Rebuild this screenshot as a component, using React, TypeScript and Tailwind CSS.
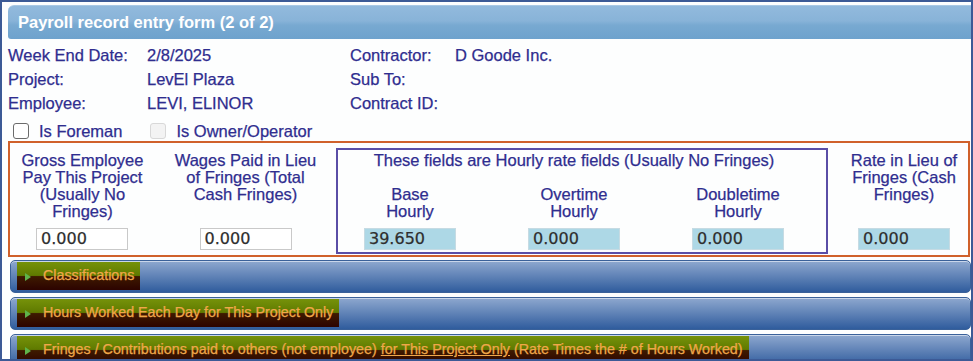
import React from 'react';

const ink = 'text-[#2f2d8f]';

function Field({ value, tinted }: { value: string; tinted?: boolean }) {
  return (
    <div
      className={
        'w-[92px] h-[22px] pl-[4px] flex items-center text-[16px] leading-none text-[#2e2e2e] ' +
        (tinted ? 'bg-[#add8e6] border border-[#c6dbe3]' : 'bg-white border border-[#c9c9c9]')
      }
      style={{ fontFamily: '"DejaVu Sans", sans-serif' }}
    >
      {value}
    </div>
  );
}

function Section({ children }: { children: React.ReactNode }) {
  return (
    <div className="h-[33px] ml-[2px] rounded-[5px] border border-[#3a6199] bg-gradient-to-b from-[#8ea8cf] via-[#5f82b6] to-[#2f5c9d] pt-[1px] pl-[6px] shadow-[inset_0_1px_0_#c9d6ea]">
      <div className="inline-flex items-center h-[28px] pl-[8px] pr-[6px] bg-[linear-gradient(#76920a_0%,#5f7a00_48%,#3e1a00_52%,#2c0300_100%)] text-[14.3px] text-[#f0a74a]">
        <svg width="6" height="8" viewBox="0 0 6 8" className="mr-[12px] mt-[2px]">
          <path d="M0 0 L6 4 L0 8 Z" fill="#5fb34a" />
        </svg>
        <span>{children}</span>
      </div>
    </div>
  );
}

export default function App() {
  return (
    <div
      className="w-[973px] h-[361px] overflow-hidden border-2 border-[#3c5a96] bg-[#fdfefe] pl-[6px] pt-[3px] [-webkit-text-stroke:0.25px_currentColor]"
      style={{ fontFamily: '"Liberation Sans", Arial, sans-serif' }}
    >
      {/* Title bar */}
      <div className="h-[34px] rounded-tl-[6px] rounded-bl-[3px] border-t border-[#a9c8e4] bg-[linear-gradient(#92badd_0%,#88b3d8_45%,#78a9d1_58%,#6ea2cd_100%)] flex items-center pl-[10px]">
        <span className="text-white font-bold text-[16.5px] [-webkit-text-stroke:0px]">Payroll record entry form (2 of 2)</span>
      </div>

      {/* Header info */}
      <div className={`mt-[4px] text-[16.5px] ${ink} grid grid-cols-[139px_203px_105px_1fr]`}>
        <div className="h-[24px] flex items-center">Week End Date:</div>
        <div className="h-[24px] flex items-center">2/8/2025</div>
        <div className="h-[24px] flex items-center">Contractor:</div>
        <div className="h-[24px] flex items-center">D Goode Inc.</div>
        <div className="h-[24px] flex items-center">Project:</div>
        <div className="h-[24px] flex items-center">LevEl Plaza</div>
        <div className="h-[24px] flex items-center">Sub To:</div>
        <div className="h-[24px] flex items-center"></div>
        <div className="h-[24px] flex items-center">Employee:</div>
        <div className="h-[24px] flex items-center">LEVI, ELINOR</div>
        <div className="h-[24px] flex items-center">Contract ID:</div>
        <div className="h-[24px] flex items-center"></div>
      </div>

      <div className={`mt-[6px] h-[20px] flex items-center text-[16.5px] ${ink}`}>
        <span className="ml-[5px] w-[16px] h-[16px] rounded-[3px] border-[1.5px] border-[#6b6b6b] bg-white" />
        <span className="ml-[10px]">Is Foreman</span>
        <span className="ml-[28px] w-[16px] h-[16px] rounded-[3px] border border-[#d8d8d8] bg-[#f3f3f3]" />
        <span className="ml-[10px]">Is Owner/Operator</span>
      </div>

      {/* Rates */}
      <div className={`mr-[1px] border-2 border-[#d0612b] flex pt-[5px] pb-[1px] text-[16.5px] leading-[17px] ${ink}`}>
        <div className="w-[145px] flex flex-col items-center pt-[4px]">
          <div className="h-[68px] text-center">
            Gross Employee<br />Pay This Project<br />(Usually No<br />Fringes)
          </div>
          <div className="mt-[8px] ml-[-1px]">
            <Field value="0.000" />
          </div>
        </div>
        <div className="w-[181px] flex flex-col items-center pt-[4px]">
          <div className="h-[68px] text-center">
            Wages Paid in Lieu<br />of Fringes (Total<br />Cash Fringes)
          </div>
          <div className="mt-[8px]">
            <Field value="0.000" />
          </div>
        </div>
        <div className="w-[492px] border-2 border-[#5a4ea6] pt-[2px] pb-[2px] pl-[2px]">
          <div className="w-[468px] text-center">These fields are Hourly rate fields (Usually No Fringes)</div>
          <div className="w-[468px] mt-[17px] flex gap-[24px]">
            {[
              ['Base', '39.650'],
              ['Overtime', '0.000'],
              ['Doubletime', '0.000'],
            ].map(([label, value]) => (
              <div key={label} className="w-[140px] flex flex-col items-center">
                <div className="h-[34px] text-center">
                  {label}
                  <br />
                  Hourly
                </div>
                <div className="mt-[8px]">
                  <Field value={value} tinted />
                </div>
              </div>
            ))}
          </div>
        </div>
        <div className="flex-1 pl-[12px] flex flex-col items-center pt-[4px]">
          <div className="h-[68px] text-center">
            Rate in Lieu of<br />Fringes (Cash<br />Fringes)
          </div>
          <div className="mt-[8px]">
            <Field value="0.000" tinted />
          </div>
        </div>
      </div>

      {/* Collapsed sections */}
      <div className="mt-[3px] flex flex-col gap-[4px]">
        <Section>Classifications</Section>
        <Section>Hours Worked Each Day for This Project Only</Section>
        <Section>
          Fringes / Contributions paid to others (not employee) <span className="underline">for This Project Only</span> (Rate Times the # of Hours Worked)
        </Section>
      </div>
    </div>
  );
}
